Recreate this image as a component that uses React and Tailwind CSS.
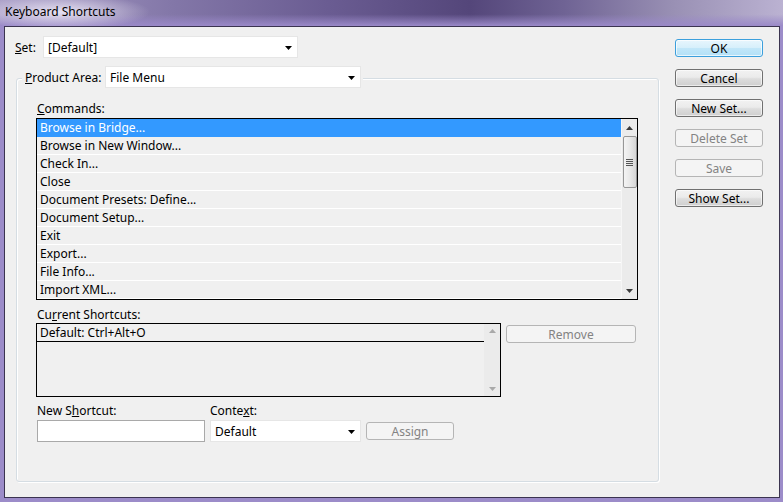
import React from "react";

const commands = [
  "Browse in Bridge...",
  "Browse in New Window...",
  "Check In...",
  "Close",
  "Document Presets: Define...",
  "Document Setup...",
  "Exit",
  "Export...",
  "File Info...",
  "Import XML...",
];

function Caret({ className = "" }) {
  return (
    <svg width="7" height="4" viewBox="0 0 7 4" className={className}>
      <path d="M0 0h7L3.5 4z" fill="currentColor" />
    </svg>
  );
}

function CaretUp({ className = "" }) {
  return (
    <svg width="7" height="4" viewBox="0 0 7 4" className={className}>
      <path d="M0 4h7L3.5 0z" fill="currentColor" />
    </svg>
  );
}

function Dropdown({ value, className = "" }) {
  return (
    <div className={`h-[22px] bg-white border border-[#e6e6e6] flex items-center pl-[4px] pr-[5px] ${className}`}>
      <span className="flex-1 leading-none pt-[1px]">{value}</span>
      <Caret className="text-black mt-[1px]" />
    </div>
  );
}

function Btn({ children, kind = "normal", className = "" }) {
  const look =
    kind === "default"
      ? "border-[#3c9fdc] bg-[linear-gradient(#e8f6fd,#d6effb_50%,#c2e7f9_50%,#b3e0f7)] text-black shadow-[inset_0_0_0_1px_rgba(255,255,255,0.7)]"
      : kind === "disabled"
      ? "border-[#b5b5b5] bg-[#f4f4f4] text-[#838383]"
      : "border-[#707070] bg-[linear-gradient(#f2f2f2,#ebebeb_45%,#dddddd_55%,#cfcfcf)] text-black shadow-[inset_0_0_0_1px_rgba(255,255,255,0.6)]";
  return (
    <div className={`h-[18px] rounded-[3px] border flex items-center justify-center leading-none pt-[1px] ${look} ${className}`}>
      {children}
    </div>
  );
}

export default function App() {
  return (
    <div className="w-[783px] h-[502px] overflow-hidden flex flex-col bg-[#9c8cc9] font-['Noto_Sans',sans-serif] text-[12px] text-black">
      <div className="h-[26px] shrink-0 flex items-center pl-[5px] pb-[3px] bg-[radial-gradient(ellipse_90px_18px_at_60px_12px,rgba(235,230,245,0.95),transparent),linear-gradient(180deg,transparent_55%,#9a89c8),linear-gradient(90deg,#a89dc6_0%,#8377a8_22%,#6a5c92_42%,#54467a_60%,#6f6394_72%,#9990b4_86%,#bbb2d2_100%)]">
        <span className="leading-none">Keyboard Shortcuts</span>
      </div>

      <div className="ml-[4px] w-[776px] h-[472px] border border-[#3b3450] bg-[#f0f0f0] flex">
        {/* left side */}
        <div className="w-[670px] pt-[9px]">
          <div className="flex items-center h-[22px] pl-[10px]">
            <span className="w-[28px] pt-[1px]">
              <u>S</u>et:
            </span>
            <Dropdown value="[Default]" className="w-[255px]" />
          </div>

          <div className="mt-[20px] ml-[11px] w-[643px] h-[404px] rounded-[3px] border border-[#d5dde3] shadow-[inset_1px_1px_0_#fff,1px_1px_0_#fff] pl-[19px]">
            <div className="-mt-[13px] -ml-[14px] w-fit h-[22px] flex items-center bg-[#f0f0f0] pl-[3px] pr-[2px]">
              <span className="w-[80px] pt-[1px]">
                <u>P</u>roduct Area:
              </span>
              <Dropdown value="File Menu" className="w-[256px]" />
            </div>

            <div className="mt-[13px] h-[16px] leading-[16px] pl-[1px]">
              <u>C</u>ommands:
            </div>
            <div className="mt-[1px] w-[602px] h-[182px] border border-black flex">
              <div className="w-[584px] flex flex-col">
                {commands.map((c, i) => (
                  <div
                    key={c}
                    className={`h-[18px] shrink-0 border-b pl-[3px] pt-[1px] flex items-center leading-none ${
                      i === 0 ? "bg-[#3399ff] text-white border-[#3399ff]" : "border-white"
                    }`}
                  >
                    {c}
                  </div>
                ))}
              </div>
              <div className="w-[16px] bg-[#ebebeb] border-l border-[#f6f6f6] flex flex-col items-center">
                <div className="h-[17px] flex items-center justify-center">
                  <CaretUp className="text-[#3a3a3a]" />
                </div>
                <div className="w-[14px] h-[52px] rounded-[2px] border border-[#979797] bg-[linear-gradient(90deg,#f4f4f4,#e8e8e8_50%,#d6d6d6)] flex flex-col items-center justify-center gap-[1px]">
                  <div className="w-[7px] h-[1px] bg-[#555]" />
                  <div className="w-[7px] h-[1px] bg-[#555]" />
                  <div className="w-[7px] h-[1px] bg-[#555]" />
                  <div className="w-[7px] h-[1px] bg-[#555]" />
                </div>
                <div className="flex-1" />
                <div className="h-[17px] flex items-center justify-center">
                  <Caret className="text-[#3a3a3a]" />
                </div>
              </div>
            </div>

            <div className="mt-[7px] h-[16px] leading-[16px] pl-[1px]">
              Cu<u>r</u>rent Shortcuts:
            </div>
            <div className="flex items-start">
              <div className="w-[465px] h-[74px] border border-black flex">
                <div className="flex-1">
                  <div className="h-[18px] border-b border-black pl-[3px] pt-[1px] flex items-center leading-none">
                    Default: Ctrl+Alt+O
                  </div>
                </div>
                <div className="w-[16px] bg-[#ebebeb] flex flex-col items-center justify-between py-[5px]">
                  <CaretUp className="text-[#a9a9a9]" />
                  <Caret className="text-[#a9a9a9]" />
                </div>
              </div>
              <Btn kind="disabled" className="ml-[5px] mt-[2px] w-[130px]">
                Remove
              </Btn>
            </div>

            <div className="mt-[6px] flex">
              <div className="pl-[1px]">
                <div className="h-[16px] leading-[16px]">
                  New S<u>h</u>ortcut:
                </div>
                <div className="mt-[1px] w-[168px] h-[22px] bg-white border border-[#a9a9a9]" />
              </div>
              <div className="ml-[5px]">
                <div className="h-[16px] leading-[16px]">
                  Conte<u>x</u>t:
                </div>
                <div className="mt-[1px] flex items-start">
                  <Dropdown value="Default" className="w-[151px]" />
                  <Btn kind="disabled" className="ml-[5px] mt-[2px] w-[88px]">
                    Assign
                  </Btn>
                </div>
              </div>
            </div>
          </div>
        </div>

        {/* right side buttons */}
        <div className="pt-[12px] flex flex-col gap-[12px]">
          <Btn kind="default" className="w-[88px]">OK</Btn>
          <Btn className="w-[88px]">Cancel</Btn>
          <Btn className="w-[88px]">New Set...</Btn>
          <Btn kind="disabled" className="w-[88px]">Delete Set</Btn>
          <Btn kind="disabled" className="w-[88px]">Save</Btn>
          <Btn className="w-[88px]">Show Set...</Btn>
        </div>
      </div>
    </div>
  );
}
